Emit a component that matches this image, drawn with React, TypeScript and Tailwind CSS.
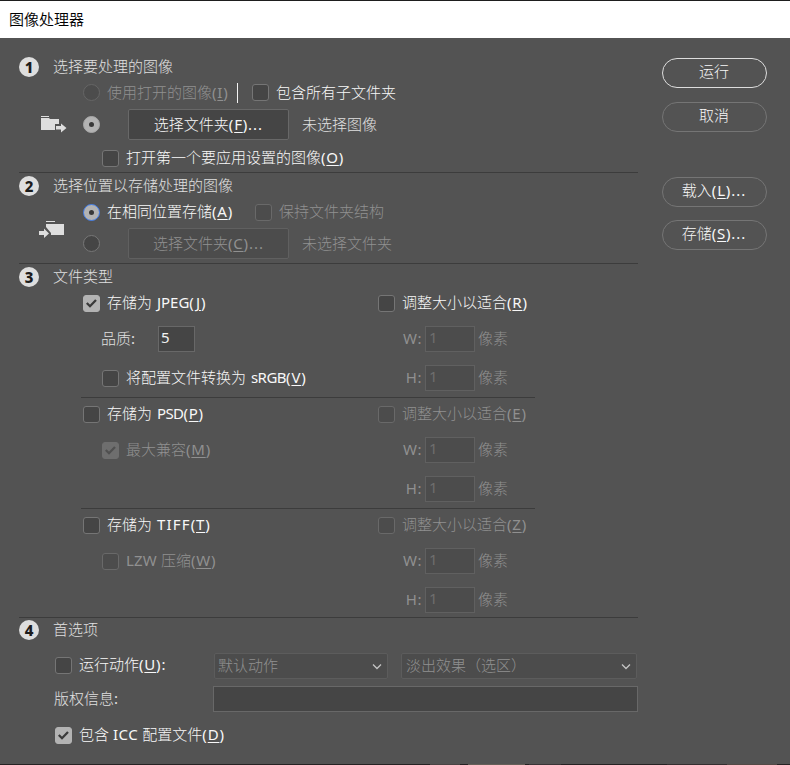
import { ReactNode } from "react";
import clsx from "clsx";

const En = ({
  children,
  className = "tracking-[0.2px]",
}: {
  children: ReactNode;
  className?: string;
}) => <span className={clsx("font-normal", className)}>{children}</span>;

const Key = ({ children }: { children: string }) => (
  <span className="font-normal tracking-[0.8px]">
    (<span className="underline underline-offset-2">{children}</span>)
  </span>
);

const Dots = () => <span className="font-normal tracking-[1px]">...</span>;

const Text = ({
  children,
  className,
  tone = "on",
}: {
  children: ReactNode;
  className?: string;
  tone?: "on" | "soft" | "off";
}) => (
  <span
    className={clsx(
      "whitespace-nowrap pb-[2px] leading-5",
      tone === "on" && "text-[#f8f8f8]",
      tone === "soft" && "text-[#e0e0e0]",
      tone === "off" && "text-[#909090]",
      className
    )}
  >
    {children}
  </span>
);

const Check = ({ checked, off }: { checked?: boolean; off?: boolean }) => (
  <span
    className={clsx(
      "flex h-[17px] w-[17px] shrink-0 items-center justify-center rounded-[3px] border",
      checked && !off && "border-[#b3b3b3] bg-[#b3b3b3]",
      checked && off && "border-[#6e6e6e] bg-[#6e6e6e]",
      !checked && !off && "border-[#757575] bg-[#454545]",
      !checked && off && "border-[#696969] bg-[#4c4c4c]"
    )}
  >
    {checked && (
      <svg width="13" height="13" viewBox="0 0 13 13" fill="none">
        <path
          d="M1.800 6 5 9.200 11 3"
          stroke={off ? "#505050" : "#3a3a3a"}
          strokeWidth="2.300"
        />
      </svg>
    )}
  </span>
);

const Radio = ({
  checked,
  off,
  focus,
}: {
  checked?: boolean;
  off?: boolean;
  focus?: boolean;
}) => (
  <span
    className={clsx(
      "flex h-[17px] w-[17px] shrink-0 items-center justify-center rounded-full border",
      checked && "bg-[#b3b3b3]",
      checked && (focus ? "border-[#3f7be8]" : "border-[#a8a8a8]"),
      !checked && off && "border-[#666666] bg-[#4c4c4c]",
      !checked && !off && "border-[#777777] bg-[#454545]"
    )}
  >
    {checked && <span className="h-[5px] w-[5px] rounded-full bg-[#383838]" />}
  </span>
);

const Heading = ({ n, children }: { n: number; children: string }) => (
  <div className="flex h-[26px] items-center pl-[19px]">
    <span className="flex h-5 w-5 items-center justify-center rounded-full bg-[#dedede] pb-px text-[15px] font-extrabold leading-5 text-[#1c1c1c]">
      {n}
    </span>
    <Text tone="soft" className="ml-[14px]">
      {children}
    </Text>
  </div>
);

const FolderButton = ({ children, off }: { children: ReactNode; off?: boolean }) => (
  <button
    className={clsx(
      "flex h-[31px] w-[161px] shrink-0 items-center justify-center rounded-[2px] border",
      off ? "border-[#606060] bg-[#4c4c4c]" : "border-[#686868] bg-[#454545]"
    )}
  >
    <Text tone={off ? "off" : "on"}>{children}</Text>
  </button>
);

const Size = ({ label }: { label: string }) => (
  <div className="flex items-center">
    <Text tone="off" className="w-[44px] text-right">
      <En className="tracking-[0.5px]">{label}:</En>
    </Text>
    <span className="ml-[3px] flex h-[26px] w-[50px] items-center border border-[#606060] bg-[#4c4c4c] pb-[3px] pl-[3px] font-normal text-[#6e6e6e]">
      1
    </span>
    <Text tone="off" className="ml-[3px]">
      像素
    </Text>
  </div>
);

const Resize = ({ k, off }: { k: string; off?: boolean }) => (
  <div className="flex items-center">
    <Check off={off} />
    <Text tone={off ? "off" : "on"} className="ml-[7px]">
      调整大小以适合
      <Key>{k}</Key>
    </Text>
  </div>
);

const Pair = ({
  left,
  right,
  className,
}: {
  left?: ReactNode;
  right: ReactNode;
  className: string;
}) => (
  <div className={clsx("flex items-center pl-[83px]", className)}>
    <div className="flex w-[295px] items-center">{left}</div>
    {right}
  </div>
);

const Select = ({ children, className }: { children: string; className: string }) => (
  <div
    className={clsx(
      "flex h-[26px] items-center justify-between rounded-[2px] border border-[#5c5c5c] bg-[#4c4c4c] pr-1",
      className
    )}
  >
    <Text tone="off">{children}</Text>
    <svg width="12" height="10" viewBox="0 0 12 10" fill="none">
      <path d="M2 3.500 6 7.500 10 3.500" stroke="#c4c4c4" strokeWidth="1.300" />
    </svg>
  </div>
);

const Pill = ({
  children,
  className,
  main,
}: {
  children: ReactNode;
  className?: string;
  main?: boolean;
}) => (
  <button
    className={clsx(
      "flex h-[30px] w-[105px] items-center justify-center rounded-full border pb-[3px] pr-px",
      main ? "border-[#dddddd]" : "border-[#757575]",
      className
    )}
  >
    <Text>{children}</Text>
  </button>
);

const Rule = ({ className }: { className: string }) => (
  <div className={clsx("h-px bg-[#3c3c3c]", className)} />
);

const App = () => (
  <div className="flex h-[765px] w-[790px] flex-col overflow-hidden bg-[#535353] font-['Noto_Sans','Noto_Sans_CJK_SC',sans-serif] text-[15px] font-light">
    <div className="flex h-[38px] shrink-0 items-center border-t border-[#1e1e1e] bg-white pl-[9px] font-[350] text-black">
      图像处理器
    </div>

    <div className="flex grow">
      <div className="w-[638px]">
        <section className="pt-4">
          <Heading n={1}>选择要处理的图像</Heading>
          <div className="flex h-[25px] items-center pl-[83px]">
            <Radio off />
            <Text tone="off" className="ml-[7px] w-[130px]">
              使用打开的图像
              <Key>I</Key>
            </Text>
            <span className="mr-[14px] h-5 w-px bg-[#f2f2f2]" />
            <Check />
            <Text className="ml-[7px]">包含所有子文件夹</Text>
          </div>
          <div className="flex h-[39px] items-center pl-[40px]">
            <svg width="27" height="18" viewBox="0 0 27 18" fill="#dedede" className="mr-4">
              <path d="M1 0h8v1H1zM1 2h8l1 1h9v5h-4v6H1z" />
              <path d="M16 10h5V7.500l5.500 4.500-5.500 4.500v-3h-5z" />
            </svg>
            <Radio checked />
            <div className="ml-7 flex items-center">
              <FolderButton>
                选择文件夹
                <Key>F</Key>
                <Dots />
              </FolderButton>
            </div>
            <Text tone="soft" className="ml-[13px]">
              未选择图像
            </Text>
          </div>
          <div className="flex h-[28px] items-center pl-[102px]">
            <Check />
            <Text className="ml-[7px]">
              打开第一个要应用设置的图像
              <Key>O</Key>
            </Text>
          </div>
        </section>
        <Rule className="ml-[19px]" />

        <section>
          <Heading n={2}>选择位置以存储处理的图像</Heading>
          <div className="flex h-[26px] items-center pl-[83px]">
            <Radio checked focus />
            <Text className="ml-[7px] w-[148px]">
              在相同位置存储
              <Key>A</Key>
            </Text>
            <Check off />
            <Text tone="off" className="ml-[7px]">
              保持文件夹结构
            </Text>
          </div>
          <div className="flex h-[37px] items-center pl-[38px]">
            <svg width="27" height="18" viewBox="0 0 27 18" fill="#dedede" className="-mt-7 mr-[18px]">
              <path d="M8 0h9v1H8zM8 3h18v11H13V12L8 6z" />
              <path d="M1 10h5V7.500l5 5-5 4.500v-3H1z" />
            </svg>
            <Radio />
            <div className="ml-7 flex items-center">
              <FolderButton off>
                选择文件夹
                <Key>C</Key>
                <Dots />
              </FolderButton>
            </div>
            <Text tone="off" className="ml-[13px]">
              未选择文件夹
            </Text>
          </div>
        </section>
        <Rule className="ml-[19px] mt-px" />

        <section>
          <Heading n={3}>文件类型</Heading>
          <Pair
            className="h-[26px]"
            left={
              <>
                <Check checked />
                <Text className="ml-[7px]">
                  存储为 <En className="ml-px tracking-normal">JPEG</En>
                  <Key>J</Key>
                </Text>
              </>
            }
            right={<Resize k="R" />}
          />
          <Pair
            className="h-[46px]"
            left={
              <>
                <Text tone="soft" className="ml-[18px] w-[57px]">
                  品质<En>:</En>
                </Text>
                <span className="flex h-[26px] w-[37px] items-center border border-[#686868] bg-[#454545] pb-[3px] pl-[2px] font-normal text-[#f2f2f2]">
                  5
                </span>
              </>
            }
            right={<Size label="W" />}
          />
          <Pair
            className="h-[32px]"
            left={
              <div className="ml-[19px] flex items-center">
                <Check />
                <Text className="ml-[7px]">
                  将配置文件转换为 <En className="ml-px -tracking-[0.5px]">sRGB</En>
                  <Key>V</Key>
                </Text>
              </div>
            }
            right={<Size label="H" />}
          />
          <Rule className="ml-[81px] mt-[3px] w-[454px]" />
          <Pair
            className="h-[32px]"
            left={
              <>
                <Check />
                <Text className="ml-[7px]">
                  存储为 <En className="ml-px -tracking-[0.6px]">PSD</En>
                  <Key>P</Key>
                </Text>
              </>
            }
            right={<Resize k="E" off />}
          />
          <Pair
            className="h-[40px]"
            left={
              <div className="ml-[19px] flex items-center">
                <Check checked off />
                <Text tone="off" className="ml-[7px]">
                  最大兼容
                  <Key>M</Key>
                </Text>
              </div>
            }
            right={<Size label="W" />}
          />
          <Pair className="h-[38px]" right={<Size label="H" />} />
          <Rule className="ml-[81px] w-[454px]" />
          <Pair
            className="h-[32px]"
            left={
              <>
                <Check />
                <Text className="ml-[7px]">
                  存储为 <En className="ml-px tracking-[1.2px]">TIFF</En>
                  <Key>T</Key>
                </Text>
              </>
            }
            right={<Resize k="Z" off />}
          />
          <Pair
            className="h-[40px]"
            left={
              <div className="ml-[19px] flex items-center">
                <Check off />
                <Text tone="off" className="ml-[7px]">
                  <En>LZW</En> 压缩
                  <Key>W</Key>
                </Text>
              </div>
            }
            right={<Size label="W" />}
          />
          <Pair className="h-[36px] pt-[2px]" right={<Size label="H" />} />
        </section>
        <Rule className="ml-[19px]" />

        <section className="-mt-px">
          <Heading n={4}>首选项</Heading>
          <div className="flex h-[44px] items-center pl-[55px]">
            <Check />
            <Text className="ml-[7px] w-[135px]">
              运行动作
              <Key>U</Key>
              <En>:</En>
            </Text>
            <Select className="mt-[2px] w-[174px] pl-[3px]">默认动作</Select>
            <Select className="ml-[13px] mt-[2px] w-[236px] pl-[4px]">淡出效果（选区）</Select>
          </div>
          <div className="flex h-[24px] items-center pl-[54px]">
            <Text tone="soft" className="w-[159px]">
              版权信息<En>:</En>
            </Text>
            <span className="h-[26px] w-[425px] border border-[#686868] bg-[#454545]" />
          </div>
          <div className="flex h-[48px] items-center pl-[55px]">
            <Check checked />
            <Text className="ml-[7px]">
              包含 <En className="tracking-[0.6px]">ICC</En> 配置文件
              <Key>D</Key>
            </Text>
          </div>
        </section>
      </div>

      <div className="flex flex-col pl-6 pt-5">
        <Pill main>运行</Pill>
        <Pill className="mt-[14px]">取消</Pill>
        <Pill className="mt-[45px]">
          载入
          <Key>L</Key>
          <Dots />
        </Pill>
        <Pill className="mt-[13px]">
          存储
          <Key>S</Key>
          <Dots />
        </Pill>
      </div>
    </div>
    <div className="flex h-px shrink-0 bg-[#262223]">
      <span className="ml-[430px] w-[30px] bg-[#4a4444]" />
      <span className="ml-2 w-[57px] bg-[#655f58]" />
      <span className="ml-1 w-[32px] bg-[#3a3436]" />
      <span className="ml-[106px] w-[60px] bg-[#352f30]" />
      <span className="w-[50px] bg-[#544a46]" />
    </div>
  </div>
);

export default App;
